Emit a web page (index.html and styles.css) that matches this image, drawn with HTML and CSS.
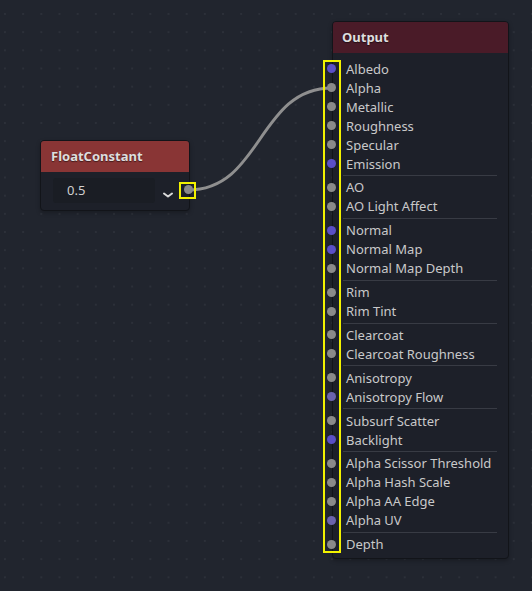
FILE: index.html
```html
<!DOCTYPE html>
<html>
<head>
<meta charset="utf-8">
<link rel="stylesheet" href="styles.css">
</head>
<body>
<div class="canvas">
  <svg class="wire" width="532" height="591" viewBox="0 0 532 591">
    <path d="M188 190 C 262 190, 258 88, 332 88" fill="none" stroke="#8f8f8f" stroke-width="3" stroke-linecap="round"/>
  </svg>

  <div class="node float">
    <div class="head">FloatConstant</div>
    <div class="fbody">
      <div class="field">0.5</div>
      <svg class="chev" width="12" height="8" viewBox="0 0 12 8"><path d="M2 2.5 L6 5.5 L10 2.5" fill="none" stroke="#d8d8d8" stroke-width="2" stroke-linecap="round" stroke-linejoin="round"/></svg>
    </div>
    <span class="port gray out"></span>
    <span class="hl hl-float"></span>
  </div>

  <div class="node output">
    <div class="head">Output</div>
    <div class="rows">
      <div class="row"><span class="port blue"></span><span class="lbl">Albedo</span></div>
      <div class="row"><span class="port gray"></span><span class="lbl">Alpha</span></div>
      <div class="row"><span class="port gray"></span><span class="lbl">Metallic</span></div>
      <div class="row"><span class="port gray"></span><span class="lbl">Roughness</span></div>
      <div class="row"><span class="port gray"></span><span class="lbl">Specular</span></div>
      <div class="row"><span class="port blue"></span><span class="lbl">Emission</span></div>
      <div class="sep"></div>
      <div class="row"><span class="port gray"></span><span class="lbl">AO</span></div>
      <div class="row"><span class="port gray"></span><span class="lbl">AO Light Affect</span></div>
      <div class="sep"></div>
      <div class="row"><span class="port blue"></span><span class="lbl">Normal</span></div>
      <div class="row"><span class="port blue"></span><span class="lbl">Normal Map</span></div>
      <div class="row"><span class="port gray"></span><span class="lbl">Normal Map Depth</span></div>
      <div class="sep"></div>
      <div class="row"><span class="port gray"></span><span class="lbl">Rim</span></div>
      <div class="row"><span class="port gray"></span><span class="lbl">Rim Tint</span></div>
      <div class="sep"></div>
      <div class="row"><span class="port gray"></span><span class="lbl">Clearcoat</span></div>
      <div class="row"><span class="port gray"></span><span class="lbl">Clearcoat Roughness</span></div>
      <div class="sep"></div>
      <div class="row"><span class="port gray"></span><span class="lbl">Anisotropy</span></div>
      <div class="row"><span class="port purple"></span><span class="lbl">Anisotropy Flow</span></div>
      <div class="sep"></div>
      <div class="row"><span class="port gray"></span><span class="lbl">Subsurf Scatter</span></div>
      <div class="row"><span class="port blue"></span><span class="lbl">Backlight</span></div>
      <div class="sep"></div>
      <div class="row"><span class="port gray"></span><span class="lbl">Alpha Scissor Threshold</span></div>
      <div class="row"><span class="port gray"></span><span class="lbl">Alpha Hash Scale</span></div>
      <div class="row"><span class="port gray"></span><span class="lbl">Alpha AA Edge</span></div>
      <div class="row"><span class="port purple"></span><span class="lbl">Alpha UV</span></div>
      <div class="sep"></div>
      <div class="row"><span class="port gray"></span><span class="lbl">Depth</span></div>
    </div>
    <span class="hl hl-out"></span>
  </div>
</div>
</body>
</html>
```

FILE: styles.css
```css
* { box-sizing: border-box; }
html, body { margin: 0; padding: 0; }
body {
  width: 532px;
  height: 591px;
  overflow: hidden;
  background: #21252e;
  font-family: "Noto Sans", "DejaVu Sans", sans-serif;
}
.canvas {
  position: relative;
  width: 532px;
  height: 591px;
  background-color: #21252e;
  background-image: conic-gradient(from 270deg at 2px 2px, #2c3039 25%, transparent 0);
  background-size: 18.18px 18.18px;
  background-position: 4px 13px;
}
.wire {
  position: absolute;
  left: 0;
  top: 0;
  z-index: 1;
}
.node {
  position: absolute;
  background: #1d2029;
  border: 1px solid #121419;
  border-radius: 4px;
  box-shadow: 0 2px 4px rgba(0,0,0,0.25);
}
.head {
  height: 31px;
  line-height: 31px;
  font-weight: bold;
  font-size: 13px;
  color: #dedede;
  text-shadow: 0 1px 1px rgba(0,0,0,0.5);
  border-radius: 3px 3px 0 0;
}
.float {
  left: 40px;
  top: 140px;
  width: 150px;
  height: 71px;
  z-index: 2;
}
.float .head {
  background: #893535;
  padding-left: 10px;
}
.fbody {
  display: flex;
  align-items: center;
  padding: 6px 0 0 12px;
}
.field {
  width: 102px;
  height: 25px;
  line-height: 25px;
  background: #1a1d24;
  border-radius: 3px;
  padding-left: 14px;
  font-size: 13px;
  color: #d0d0d0;
}
.chev {
  margin-left: 7px;
  margin-top: 8px;
}
.output {
  left: 332px;
  top: 21px;
  width: 177px;
  height: 538px;
  z-index: 2;
}
.output .head {
  background: #4a1b28;
  padding-left: 9px;
}
.rows {
  display: flex;
  flex-direction: column;
  padding: 6px 0 3px;
}
.row {
  display: flex;
  align-items: center;
  height: 19px;
}
.port {
  width: 9px;
  height: 9px;
  border-radius: 50%;
  flex: none;
}
.row .port { margin-left: -6px; }
.gray { background: #8a8a8a; }
.blue { background: #5a4fc7; }
.purple { background: #6b63ad; }
.lbl {
  margin-left: 10px;
  font-size: 13px;
  color: #c9c9c9;
  white-space: nowrap;
}
.sep {
  height: 1px;
  margin: 2px 11px 1.85px 10px;
  background: #383b44;
  flex: none;
}
.out {
  position: absolute;
  right: -4px;
  top: 44px;
}
.hl {
  position: absolute;
  border: 2px solid #f2f200;
  z-index: 3;
}
.hl-float {
  right: -7px;
  top: 41px;
  width: 17px;
  height: 17px;
}
.hl-out {
  left: -10px;
  top: 38px;
  width: 18px;
  height: 493px;
}
```
